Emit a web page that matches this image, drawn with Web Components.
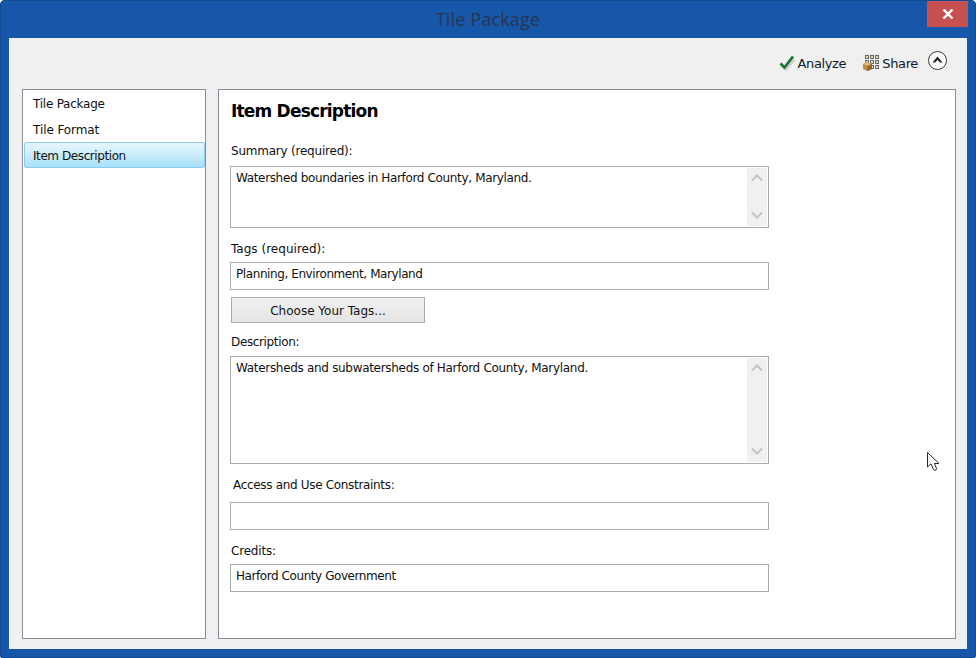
<!DOCTYPE html>
<html>
<head>
<meta charset="utf-8">
<title>Tile Package</title>
<style>
  html, body { margin: 0; padding: 0; background: #fff; }
  body { font: 12px "DejaVu Sans", Tahoma, sans-serif; color: #111; }
</style>
</head>
<body>
<app-window>
  <title-bar slot="title">Tile Package</title-bar>
  <tool-bar slot="tools"></tool-bar>
  <nav-list slot="nav">
    <nav-item>Tile Package</nav-item>
    <nav-item style="letter-spacing:-.08px">Tile Format</nav-item>
    <nav-item selected style="letter-spacing:-.42px">Item Description</nav-item>
  </nav-list>
  <item-panel slot="main" heading="Item Description">
    <form-field label="Summary (required):" rows="62" scroll gap="7" style="margin-top:22px;--label-track:-.22px;letter-spacing:-.35px">Watershed boundaries in Harford County, Maryland.</form-field>
    <form-field label="Tags (required):" rows="28" gap="5" style="margin-top:13px;--label-track:.02px;letter-spacing:-.41px">Planning, Environment, Maryland</form-field>
    <tag-button style="margin-top:7px">Choose Your Tags...</tag-button>
    <form-field label="Description:" rows="108" scroll style="margin-top:11px;--label-track:-.36px">Watersheds and subwatersheds of Harford County, Maryland.</form-field>
    <form-field label="Access and Use Constraints:" rows="28" indent="2" gap="9" style="margin-top:13px;--label-track:-.32px"></form-field>
    <form-field label="Credits:" rows="28" gap="5" style="margin-top:13px;--label-track:-.2px;letter-spacing:-.43px">Harford County Government</form-field>
  </item-panel>
  <mouse-pointer slot="overlay"></mouse-pointer>
</app-window>

<script>
// Outer dialog frame
class AppWindow extends HTMLElement {
  constructor() {
    super();
    this.attachShadow({ mode: 'open' }).innerHTML = `
      <style>
        :host {
          display: flex;
          flex-direction: column;
          position: relative;
          box-sizing: border-box;
          width: 976px;
          height: 658px;
          background: #1757aa;
          border-radius: 5px 5px 3px 3px;
          box-shadow: inset 0 0 0 1px #134a92;
          overflow: hidden;
        }
        .client {
          display: flex;
          flex-direction: column;
          flex: 1;
          margin: 0 9px 9px 9px;
          background: #f0f0f0;
        }
        .panes {
          display: flex;
          gap: 12px;
          flex: 1;
          padding: 0 11px 10px 13px;
          min-height: 0;
        }
      </style>
      <slot name="title"></slot>
      <div class="client">
        <slot name="tools"></slot>
        <div class="panes">
          <slot name="nav"></slot>
          <slot name="main"></slot>
        </div>
      </div>
      <slot name="overlay"></slot>
    `;
  }
}

class TitleBar extends HTMLElement {
  constructor() {
    super();
    this.attachShadow({ mode: 'open' }).innerHTML = `
      <style>
        :host {
          display: flex;
          align-items: center;
          justify-content: center;
          position: relative;
          height: 38px;
          flex: none;
          font: 18px "Open Sans", sans-serif;
          letter-spacing: .15px;
          color: #2a3450;
        }
        .close {
          position: absolute;
          top: 1px;
          right: 8px;
          width: 41px;
          height: 26px;
          background: #c75050;
          display: flex;
          align-items: center;
          justify-content: center;
        }
      </style>
      <slot></slot>
      <div class="close">
        <svg width="12" height="10" viewBox="0 0 12 10">
          <path d="M1.5 .5 L10.5 9.5 M10.5 .5 L1.5 9.5" stroke="#fff" stroke-width="2.4" fill="none"/>
        </svg>
      </div>
    `;
  }
}

class ToolBar extends HTMLElement {
  constructor() {
    super();
    this.attachShadow({ mode: 'open' }).innerHTML = `
      <style>
        :host {
          display: flex;
          justify-content: flex-end;
          box-sizing: border-box;
          height: 51px;
          flex: none;
          padding: 12px 19px 0 0;
        }
        .tool {
          display: flex;
          align-items: center;
          height: 26px;
          font: 13px "DejaVu Sans", Tahoma, sans-serif;
          letter-spacing: -.35px;
          color: #101828;
        }
        .analyze svg { margin-right: 2px; }
        .share { margin-left: 17px; }
        .share svg { margin-right: 2px; }
        .collapse { margin: 1px 0 0 10px; }
      </style>
      <div class="tool analyze">
        <svg width="16" height="17" viewBox="0 0 16 17">
          <path d="M2 9.5 L6 13.5 L14.5 3.5" fill="none" stroke="#d0d0d0" stroke-width="2.6" transform="translate(.8 1)"/>
          <path d="M1.5 8.5 L5.5 12.5 L14 1.5" fill="none" stroke="#1a7434" stroke-width="2.8"/>
        </svg>
        <span>Analyze</span>
      </div>
      <div class="tool share">
        <svg width="17" height="17" viewBox="0 0 17 17">
          <g fill="#dcdcb4" stroke="#6a6a6a" stroke-width="1">
            <rect x="2.5" y=".5" width="3" height="3"/><rect x="7.5" y=".5" width="3" height="3"/><rect x="12.5" y=".5" width="3" height="3"/>
            <rect x="2.5" y="5.5" width="3" height="3"/><rect x="7.5" y="5.5" width="3" height="3"/><rect x="12.5" y="5.5" width="3" height="3"/>
            <rect x="7.5" y="10.5" width="3" height="3"/><rect x="12.5" y="10.5" width="3" height="3"/>
          </g>
          <path d="M0 9 L4 7 L9 9 V14 L4.5 16 L0 14 Z" fill="#b98a45"/>
          <path d="M0 9 L4.5 11 L9 9 L4 7 Z" fill="#dcb878"/>
          <path d="M4.5 11 V16 L9 14 V9 Z" fill="#8f6428"/>
        </svg>
        <span>Share</span>
      </div>
      <svg class="collapse" width="20" height="20" viewBox="0 0 20 20">
        <circle cx="9.5" cy="9.5" r="9" fill="#fafafa" stroke="#383838" stroke-width="1"/>
        <path d="M4.5 11.5 L9.5 5.5 L14.5 11.5 L12 11.5 L9.5 9 L7 11.5 Z" fill="#222"/>
      </svg>
    `;
  }
}

class NavList extends HTMLElement {
  constructor() {
    super();
    this.attachShadow({ mode: 'open' }).innerHTML = `
      <style>
        :host {
          display: flex;
          flex-direction: column;
          box-sizing: border-box;
          width: 184px;
          flex: none;
          height: 100%;
          background: #fff;
          border: 1px solid #8b8b9b;
        }
      </style>
      <slot></slot>
    `;
  }
}

class NavItem extends HTMLElement {
  constructor() {
    super();
    this.attachShadow({ mode: 'open' }).innerHTML = `
      <style>
        :host {
          display: flex;
          align-items: center;
          box-sizing: border-box;
          height: 26px;
          padding: 2px 0 0 10px;
          flex: none;
          letter-spacing: -.24px;
        }
        :host([selected]) {
          margin-left: 1px;
          border: 1px solid #8ccbf2;
          border-radius: 2px;
          padding: 1px 0 0 8px;
          background: linear-gradient(#e6f6fe, #c8ebfc 55%, #a6e0fa);
        }
      </style>
      <slot></slot>
    `;
  }
}

class ItemPanel extends HTMLElement {
  constructor() {
    super();
    const heading = this.getAttribute('heading') || '';
    this.attachShadow({ mode: 'open' }).innerHTML = `
      <style>
        :host {
          display: flex;
          flex-direction: column;
          box-sizing: border-box;
          width: 738px;
          flex: none;
          height: 100%;
          background: #fff;
          border: 1px solid #8b8b9b;
          padding: 9px 0 0 11px;
        }
        h1 {
          margin: 0;
          height: 22px;
          font: bold 17px/24px "DejaVu Sans", Tahoma, sans-serif;
          letter-spacing: -.8px;
          color: #000;
          padding-left: 1px;
        }
      </style>
      <h1>${heading}</h1>
      <slot></slot>
    `;
  }
}

// Label with a boxed value under it, with an optional disabled scrollbar
class FormField extends HTMLElement {
  constructor() {
    super();
    const label = this.getAttribute('label') || '';
    const rows = this.getAttribute('rows') || 28;
    const gap = this.getAttribute('gap') || 6;
    const indent = Number(this.getAttribute('indent') || 0);
    const scroll = this.hasAttribute('scroll') ? `
      <div class="bar">
        <svg width="12" height="8" viewBox="0 0 12 8"><path d="M1 6.5 L6 1.5 L11 6.5" fill="none" stroke="#c4c4c4" stroke-width="2"/></svg>
        <svg width="12" height="8" viewBox="0 0 12 8"><path d="M1 1.5 L6 6.5 L11 1.5" fill="none" stroke="#c4c4c4" stroke-width="2"/></svg>
      </div>` : '';
    this.attachShadow({ mode: 'open' }).innerHTML = `
      <style>
        :host {
          display: block;
          width: 539px;
          flex: none;
          letter-spacing: -.31px;
        }
        .label {
          height: 16px;
          line-height: 16px;
          padding-left: ${1 + indent}px;
          margin-bottom: ${gap}px;
          letter-spacing: var(--label-track, -.2px);
        }
        .box {
          display: flex;
          box-sizing: border-box;
          height: ${rows}px;
          border: 1px solid #ababab;
          background: #fff;
          padding: 1px;
        }
        .text {
          flex: 1;
          padding: 2px 0 0 4px;
          line-height: 16px;
          height: 18px;
        }
        .bar {
          display: flex;
          flex-direction: column;
          justify-content: space-between;
          align-items: center;
          box-sizing: border-box;
          width: 20px;
          background: #f0f0f0;
          padding: 6px 0 7px;
        }
      </style>
      <div class="label">${label}</div>
      <div class="box"><div class="text"><slot></slot></div>${scroll}</div>
    `;
  }
}

class TagButton extends HTMLElement {
  constructor() {
    super();
    this.attachShadow({ mode: 'open' }).innerHTML = `
      <style>
        :host {
          display: flex;
          align-items: center;
          justify-content: center;
          box-sizing: border-box;
          width: 194px;
          height: 26px;
          margin-left: 1px;
          padding-top: 2px;
          flex: none;
          border: 1px solid #acacac;
          background: linear-gradient(#f0f0f0, #e5e5e5);
          letter-spacing: 0;
        }
      </style>
      <slot></slot>
    `;
  }
}

// The captured arrow cursor lying over the dialog
class MousePointer extends HTMLElement {
  constructor() {
    super();
    this.attachShadow({ mode: 'open' }).innerHTML = `
      <style>
        :host {
          position: absolute;
          left: 927px;
          top: 452px;
          width: 13px;
          height: 20px;
          display: block;
        }
      </style>
      <svg width="13" height="20" viewBox="0 0 13 20">
        <path d="M.5 .5 V15 L4 11.8 L6.5 17.5 Q8 19 9 18 L9.5 16.5 L7.3 11.5 H12 Z" fill="#fff" stroke="#23232b" stroke-width="1"/>
      </svg>
    `;
  }
}

customElements.define('app-window', AppWindow);
customElements.define('title-bar', TitleBar);
customElements.define('tool-bar', ToolBar);
customElements.define('nav-list', NavList);
customElements.define('nav-item', NavItem);
customElements.define('item-panel', ItemPanel);
customElements.define('form-field', FormField);
customElements.define('tag-button', TagButton);
customElements.define('mouse-pointer', MousePointer);
</script>
</body>
</html>
